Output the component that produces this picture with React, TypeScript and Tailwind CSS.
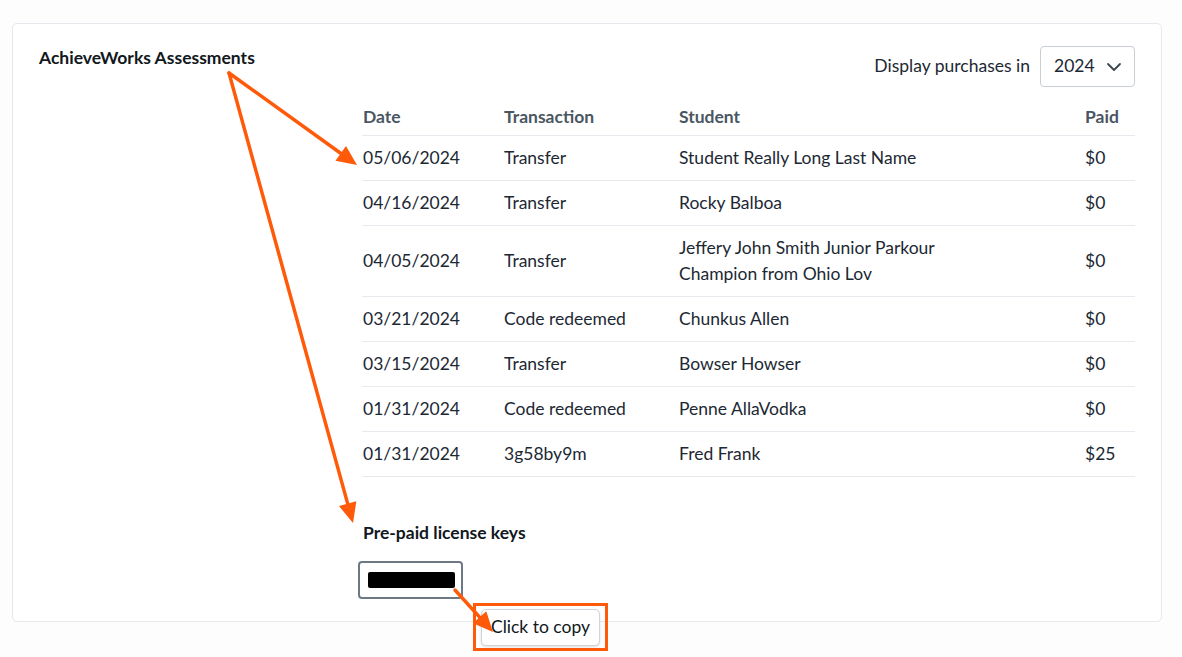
import React from "react";

const rows = [
  { date: "05/06/2024", tx: "Transfer", student: "Student Really Long Last Name", paid: "$0" },
  { date: "04/16/2024", tx: "Transfer", student: "Rocky Balboa", paid: "$0" },
  {
    date: "04/05/2024",
    tx: "Transfer",
    student: "Jeffery John Smith Junior Parkour Champion from Ohio Lov",
    paid: "$0",
  },
  { date: "03/21/2024", tx: "Code redeemed", student: "Chunkus Allen", paid: "$0" },
  { date: "03/15/2024", tx: "Transfer", student: "Bowser Howser", paid: "$0" },
  { date: "01/31/2024", tx: "Code redeemed", student: "Penne AllaVodka", paid: "$0" },
  { date: "01/31/2024", tx: "3g58by9m", student: "Fred Frank", paid: "$25" },
];

const cols = "grid grid-cols-[141px_175px_1fr_51px]";

function Arrow({ x1, y1, x2, y2 }: { x1: number; y1: number; x2: number; y2: number }) {
  // line stops at the base of the head, head is a filled triangle
  const dx = x2 - x1;
  const dy = y2 - y1;
  const len = Math.hypot(dx, dy);
  const ux = dx / len;
  const uy = dy / len;
  const headLen = 20;
  const headW = 9;
  const bx = x2 - ux * headLen;
  const by = y2 - uy * headLen;
  const px = -uy * headW;
  const py = ux * headW;
  return (
    <g>
      <line x1={x1} y1={y1} x2={bx + ux * 2} y2={by + uy * 2} stroke="#ff5a0a" strokeWidth={3.5} strokeLinecap="round" />
      <polygon points={`${x2},${y2} ${bx + px},${by + py} ${bx - px},${by - py}`} fill="#ff5a0a" />
    </g>
  );
}

export default function App() {
  return (
    <div
      className="relative w-full h-[657px] bg-[#fdfdfd] pt-[23px] px-[12px] text-[#1c2833]"
      style={{ fontFamily: "Lato, 'Noto Sans', sans-serif" }}
    >
      <div className="w-[1150px] border border-[#e5e8ec] rounded-[5px] bg-white flex pl-[26px] pr-[26px] pt-[22px] pb-[22px]">
        <div className="w-[323px] shrink-0">
          <h2 className="text-[17.5px] leading-[24px] font-bold text-[#111820]">AchieveWorks Assessments</h2>
        </div>

        <div className="flex-1 flex flex-col">
          <div className="flex items-center justify-end gap-[10px]">
            <span className="text-[17.5px] leading-[26px] -mt-[2px]">Display purchases in</span>
            <div className="w-[95px] h-[41px] border border-[#c8ced3] rounded-[4px] bg-white flex items-center justify-between pl-[13px] pr-[12px]">
              <span className="text-[17.5px]">2024</span>
              <svg width="16" height="10" viewBox="0 0 16 10" fill="none">
                <path d="M2 2l6 6 6-6" stroke="#3c4650" strokeWidth="1.8" strokeLinecap="round" strokeLinejoin="round" />
              </svg>
            </div>
          </div>

          <div className="mt-[4px]">
            <div className={`${cols} border-b border-[#e6eaee] pt-[13px] pb-[5px] text-[17.5px] leading-[26px] font-bold text-[#4a5662]`}>
              <div className="pl-[1px]">Date</div>
              <div className="pl-[1px]">Transaction</div>
              <div className="pl-[1px]">Student</div>
              <div className="pl-[1px]">Paid</div>
            </div>
            {rows.map((r, i) => (
              <div
                key={i}
                className={`${cols} items-center border-b border-[#e6eaee] py-[9px] text-[17.5px] leading-[26px]`}
              >
                <div className="pl-[1px]">{r.date}</div>
                <div className="pl-[1px]">{r.tx}</div>
                <div className="pl-[1px] max-w-[290px]">{r.student}</div>
                <div className="pl-[1px]">{r.paid}</div>
              </div>
            ))}
          </div>

          <h3 className="mt-[43px] text-[17.5px] leading-[26px] font-bold text-[#111820] pl-[1px]">
            Pre-paid license keys
          </h3>
          <div className="mt-[15px] -ml-[4px] w-[105px] h-[38px] border-2 border-[#6d7884] rounded-[4px] bg-white flex items-center pl-[8px]">
            <div className="w-[87px] h-[16px] bg-black rounded-[2px]" />
          </div>
        </div>
      </div>

      {/* tooltip over the card edge */}
      <div className="absolute left-[473px] top-[603px] w-[135px] h-[48px] border-[3px] border-[#ff5a0a] flex items-center justify-center">
        <div className="w-[119px] h-[37px] border border-[#cfd4d9] rounded-[5px] bg-white shadow-sm flex items-center justify-center text-[17.5px] text-[#111820]">
          Click to copy
        </div>
      </div>

      <svg className="absolute inset-0 pointer-events-none" width="1182" height="657">
        <Arrow x1={229} y1={73} x2={357} y2={165} />
        <Arrow x1={229} y1={73} x2={353} y2={523} />
        <Arrow x1={455} y1={590} x2={493} y2={632} />
      </svg>
    </div>
  );
}
